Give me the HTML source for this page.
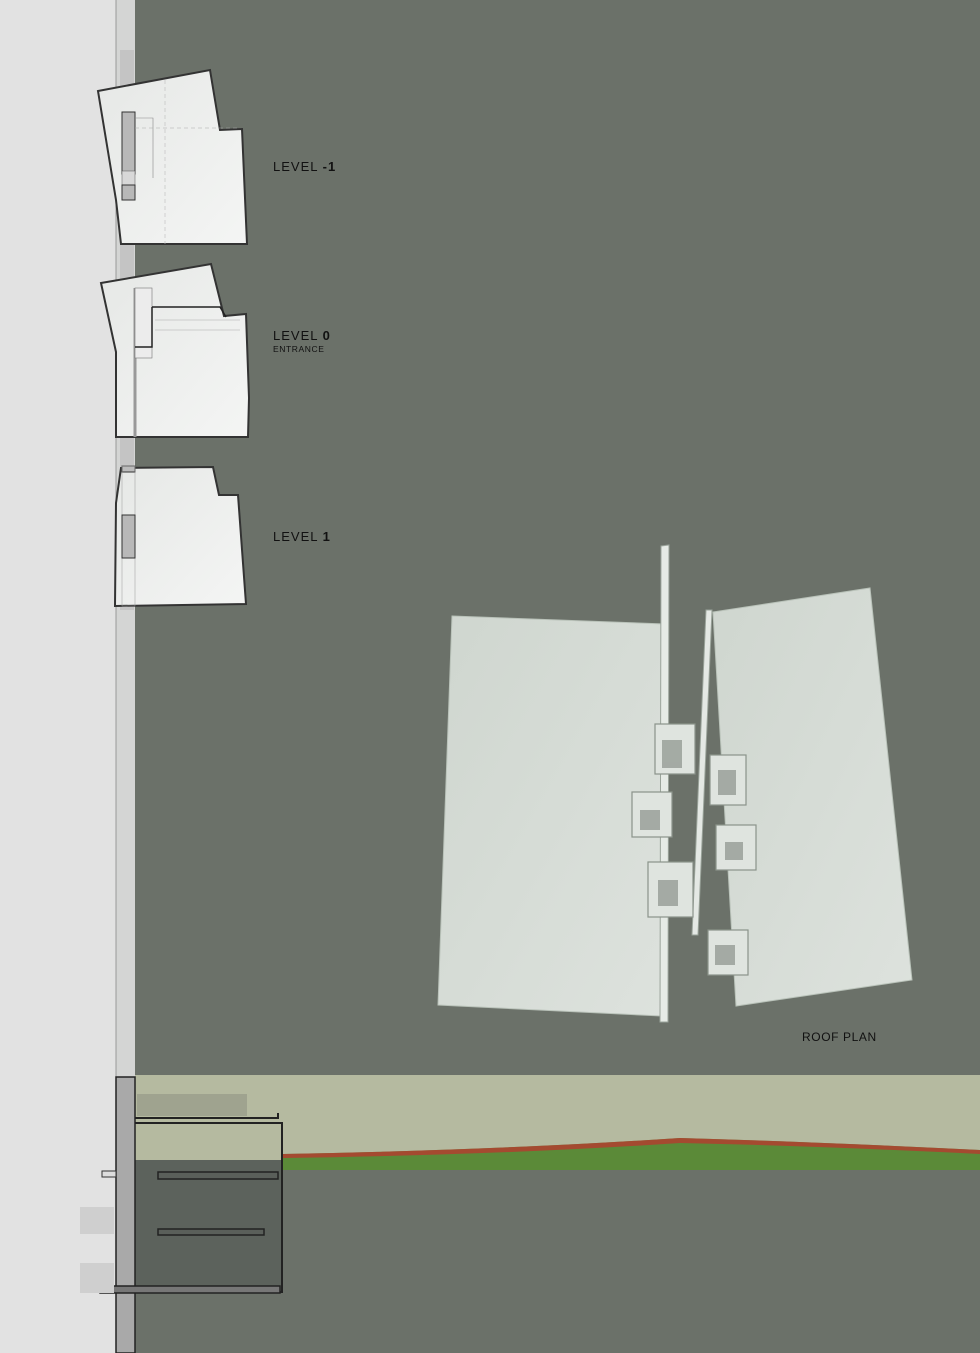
<!DOCTYPE html>
<html><head><style>
html,body{margin:0;padding:0;width:980px;height:1353px;overflow:hidden;background:#6b7169;}
svg{display:block}
text{font-family:"Liberation Sans",sans-serif;}
</style></head><body>
<svg width="980" height="1353" viewBox="0 0 980 1353" xmlns="http://www.w3.org/2000/svg">
<defs>
<linearGradient id="pg" x1="0" y1="0" x2="1" y2="1"><stop offset="0" stop-color="#e6e8e6"/><stop offset="1" stop-color="#f4f5f4"/></linearGradient>
<linearGradient id="mg" x1="0" y1="0" x2="1" y2="1"><stop offset="0" stop-color="#cfd6cf"/><stop offset="1" stop-color="#dde2dd"/></linearGradient>
</defs>
<rect x="0" y="0" width="980" height="1353" fill="#6b7169"/>
<rect x="0" y="0" width="116" height="1353" fill="#e2e2e2"/>
<rect x="116" y="0" width="19" height="1353" fill="#d4d5d4"/>
<line x1="116" y1="0" x2="116" y2="1353" stroke="#999" stroke-width="1"/>
<rect x="120" y="50" width="14" height="560" fill="#c4c4c4"/>

<!-- Level -1 -->
<polygon points="98,91 210,70 220,130 242,129 247,244 121,244 116,200" fill="url(#pg)" stroke="#333" stroke-width="2"/>
<rect x="122" y="112" width="13" height="62" fill="#b8b8b8" stroke="#333"/>
<rect x="122" y="171" width="13" height="14" fill="#d8d8d8" stroke="#555" stroke-width=".5"/>
<rect x="122" y="185" width="13" height="15" fill="#b8b8b8" stroke="#333"/>
<path d="M135 118 H153 V178" fill="none" stroke="#888" stroke-width=".6"/>
<line x1="135" y1="128" x2="240" y2="128" stroke="#aaa" stroke-dasharray="4 3" stroke-width=".6"/>
<line x1="165" y1="80" x2="165" y2="244" stroke="#bbb" stroke-dasharray="4 3" stroke-width=".6"/>
<text x="273" y="171" font-size="13" fill="#111" letter-spacing="1">LEVEL <tspan font-weight="bold">-1</tspan></text>

<!-- Level 0 -->
<polygon points="101,283 211,264 224,316 246,314 249,398 248,437 116,437 116,352" fill="url(#pg)" stroke="#333" stroke-width="2"/>
<path d="M135 288 V437" stroke="#999" stroke-width="3" fill="none"/>
<rect x="135" y="288" width="17" height="70" fill="#ececec" stroke="#777" stroke-width=".6"/>
<path d="M152 307 H220 L226 317 M152 307 V347 H135" fill="none" stroke="#222" stroke-width="1.5"/>
<line x1="155" y1="320" x2="240" y2="320" stroke="#aaa" stroke-width=".5"/>
<line x1="155" y1="330" x2="240" y2="330" stroke="#aaa" stroke-width=".5"/>
<text x="273" y="340" font-size="13" fill="#111" letter-spacing="1">LEVEL <tspan font-weight="bold">0</tspan></text>
<text x="273" y="352" font-size="8.5" fill="#111" letter-spacing=".6">ENTRANCE</text>

<!-- Level 1 -->
<polygon points="121,468 213,467 219,495 238,495 246,604 115,606 116,503" fill="url(#pg)" stroke="#333" stroke-width="2"/>
<rect x="122" y="466" width="13" height="6" fill="#bbb" stroke="#333"/>
<rect x="122" y="466" width="13" height="140" fill="none" stroke="#999" stroke-width=".5"/>
<rect x="122" y="515" width="13" height="43" fill="#b8b8b8" stroke="#333"/>
<text x="273" y="541" font-size="13" fill="#111" letter-spacing="1">LEVEL <tspan font-weight="bold">1</tspan></text>

<!-- roof plan model -->
<polygon points="452,616 665,624 661,1016 438,1005" fill="url(#mg)" stroke="#b9c2b9"/>
<polygon points="713,612 870,588 912,980 736,1006" fill="url(#mg)" stroke="#b9c2b9"/>
<polygon points="661,546 669,545 668,1022 660,1022" fill="#e6ebe6" stroke="#9aa39a"/>
<polygon points="706,610 712,610 698,935 692,935" fill="#e4e8e4" stroke="#9aa39a"/>
<g fill="#dfe4df" stroke="#8a938a" stroke-width="1.2">
<rect x="655" y="724" width="40" height="50"/><rect x="632" y="792" width="40" height="45"/>
<rect x="648" y="862" width="45" height="55"/><rect x="710" y="755" width="36" height="50"/>
<rect x="716" y="825" width="40" height="45"/><rect x="708" y="930" width="40" height="45"/>
</g>
<g fill="#7d857d" opacity=".6">
<rect x="662" y="740" width="20" height="28"/><rect x="640" y="810" width="20" height="20"/><rect x="718" y="770" width="18" height="25"/><rect x="725" y="842" width="18" height="18"/><rect x="658" y="880" width="20" height="26"/><rect x="715" y="945" width="20" height="20"/>
</g>
<text x="802" y="1041" font-size="12" fill="#111" letter-spacing=".6">ROOF PLAN</text>

<!-- section band -->
<rect x="135" y="1075" width="845" height="92" fill="#b5baa0"/>
<path d="M283 1154 Q500 1150 680 1138 Q820 1142 980 1150 V1170 H283 Z" fill="#5b8a38"/>
<path d="M283 1154 Q500 1150 680 1138 Q820 1142 980 1150 V1154 Q820 1146 680 1143 Q500 1155 283 1158 Z" fill="#b73a2e" opacity=".8"/>
<rect x="135" y="1160" width="147" height="132" fill="#5c625c"/>
<rect x="137" y="1094" width="110" height="22" fill="#9fa38f"/>
<!-- section structure -->
<rect x="116" y="1077" width="19" height="276" fill="#a9a9a9" stroke="#222" stroke-width="1.5"/>
<path d="M135 1118 H278 V1113 M135 1123 H282 V1292 H135" fill="none" stroke="#222" stroke-width="2"/>
<rect x="158" y="1172" width="120" height="7" fill="#5a5f5a" stroke="#222" stroke-width="1.5"/>
<rect x="158" y="1229" width="106" height="6" fill="#5a5f5a" stroke="#222" stroke-width="1.5"/>
<rect x="100" y="1286" width="180" height="7" fill="#777" stroke="#222" stroke-width="1.5"/>
<rect x="102" y="1171" width="14" height="6" fill="#ddd" stroke="#333"/>
<rect x="80" y="1207" width="34" height="27" fill="#cfcfcf"/>
<rect x="80" y="1263" width="34" height="30" fill="#cfcfcf"/>
</svg>
</body></html>
